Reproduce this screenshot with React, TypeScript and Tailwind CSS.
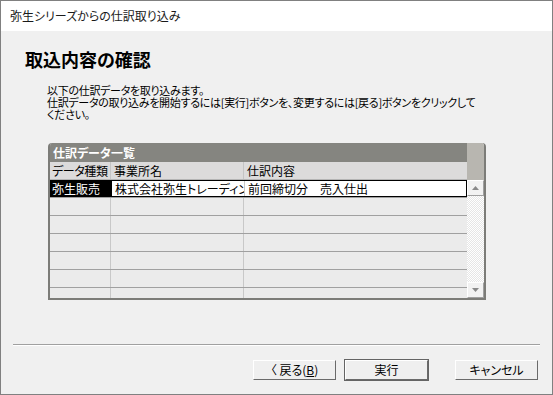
import React from "react";

const jp = "font-['Noto_Sans_CJK_JP','Noto_Sans',sans-serif] [font-feature-settings:'palt']";

function EmptyRow() {
  return (
    <div className="flex h-[18px] border-b border-[#a0a0a0] bg-[#ebebeb]">
      <div className="w-[61px] border-r border-[#c8c8c8]" />
      <div className="w-[133px] border-r border-[#c8c8c8]" />
      <div className="flex-1" />
    </div>
  );
}

function Btn({ children, def }: { children: React.ReactNode; def?: boolean }) {
  return (
    <div
      className={
        "w-[85px] h-[22px] " +
        (def ? "border border-[#646464]" : "border border-transparent")
      }
    >
      <div className="w-full h-full border-t border-l border-r border-b border-t-white border-l-white border-r-[#6a6a6a] border-b-[#6a6a6a] bg-[#efefef] flex items-center justify-center text-[12px] leading-none text-black whitespace-nowrap">
        {children}
      </div>
    </div>
  );
}

export default function App() {
  return (
    <div className={"w-[553px] h-[395px] border border-[#808080] bg-[#f0f0f0] flex flex-col " + jp}>
      <div className="h-[30px] bg-white flex items-center pl-[9px] text-[12px] text-[#1a1a1a]">
        弥生シリーズからの仕訳取り込み
      </div>
      <div className="pl-[24px] mt-[16px] text-[18px] font-bold leading-[24px] text-black">
        取込内容の確認
      </div>
      <div className="pl-[46px] mt-[13px] text-[11px] leading-[12px] text-black tracking-[-0.3px]">
        <div>以下の仕訳データを取り込みます。</div>
        <div>仕訳データの取り込みを開始するには[実行]ボタンを、変更するには[戻る]ボタンをクリックして</div>
        <div>ください。</div>
      </div>

      <div className="ml-[47px] mt-[23px] w-[438px] h-[157px] flex border-l-2 border-b-2 border-r-2 border-[#7c7c78] rounded-tl-[4px] rounded-tr-[4px] overflow-hidden bg-[#ebebeb]">
        <div className="flex-1 flex flex-col">
          <div className="h-[19px] bg-[#858580] text-white font-bold text-[12px] leading-none flex items-center pl-[3px] pt-[1px]">
            仕訳データ一覧
          </div>
          <div className="h-[18px] bg-[#dcdbdb] flex text-[12px] leading-none text-black border-b border-[#b4b4b4] whitespace-nowrap">
            <div className="w-[61px] border-r border-[#c4c4c4] flex items-center pl-[2px] overflow-hidden tracking-[-0.4px]">データ種類</div>
            <div className="w-[133px] border-r border-[#c4c4c4] flex items-center pl-[3px]">事業所名</div>
            <div className="flex-1 flex items-center pl-[3px]">仕訳内容</div>
          </div>
          <div className="h-[18px] flex text-[12px] leading-none border-b border-[#a0a0a0] whitespace-nowrap">
            <div className="w-[61px] bg-black text-white flex items-center pl-[2px]">弥生販売</div>
            <div className="flex-1 flex border border-black bg-white">
              <div className="w-[133px] border-r border-[#c8c8c8] flex items-center pl-[3px] overflow-hidden">株式会社弥生トレーディング</div>
              <div className="flex-1 flex items-center pl-[3px]">前回締切分　売入仕出</div>
            </div>
          </div>
          <EmptyRow />
          <EmptyRow />
          <EmptyRow />
          <EmptyRow />
          <EmptyRow />
          <div className="flex flex-1 bg-[#ebebeb]">
            <div className="w-[61px] border-r border-[#c8c8c8]" />
            <div className="w-[133px] border-r border-[#c8c8c8]" />
            <div className="flex-1" />
          </div>
        </div>
        <div className="w-[17px] flex flex-col">
          <div className="h-[37px] bg-[#b8b6b0]" />
          <div className="h-[16px] bg-[#f2f2f2] border border-t-white border-l-white border-r-[#a0a0a0] border-b-[#a0a0a0] flex items-center justify-center">
            <svg width="7" height="4" viewBox="0 0 7 4"><path d="M3.5 0 L7 4 L0 4 Z" fill="#8a8a8a" /></svg>
          </div>
          <div className="flex-1 bg-[repeating-conic-gradient(#ffffff_0_25%,#e6e6e6_0_50%)] bg-[length:2px_2px]" />
          <div className="h-[16px] bg-[#f2f2f2] border border-t-white border-l-white border-r-[#a0a0a0] border-b-[#a0a0a0] flex items-center justify-center">
            <svg width="7" height="4" viewBox="0 0 7 4"><path d="M0 0 L7 0 L3.5 4 Z" fill="#8a8a8a" /></svg>
          </div>
        </div>
      </div>

      <div className="mx-[12px] mt-[44px] border-t border-b border-t-[#a0a0a0] border-b-white" />

      <div className="flex justify-end mt-[13px] pr-[13px]">
        <Btn>〈 戻る(<span className="underline">B</span>)</Btn>
        <div className="w-[7px]" />
        <Btn def>実行</Btn>
        <div className="w-[25px]" />
        <Btn>キャンセル</Btn>
      </div>
    </div>
  );
}
